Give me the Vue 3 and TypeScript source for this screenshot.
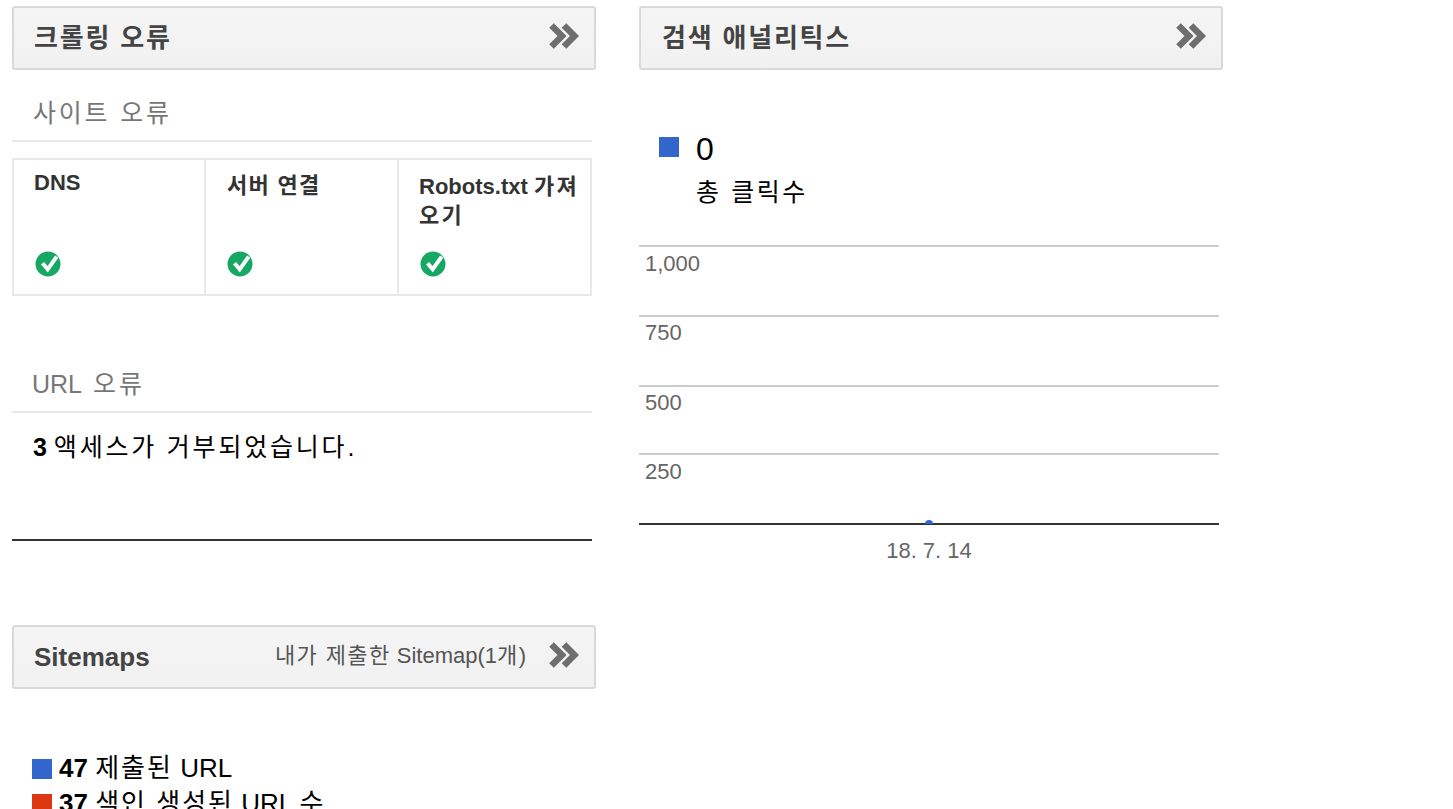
<script setup lang="ts">
const checks = [
  { name: 'DNS', cls: 'dns', ko: '', ko2: '' },
  { name: '', cls: 'srv', ko: '서버 연결', ko2: '' },
  { name: 'Robots.txt ', cls: 'rob', ko: '가져', ko2: '오기' },
]
const ticks = [
  { label: '1,000', h: 70 },
  { label: '750', h: 70 },
  { label: '500', h: 68 },
  { label: '250', h: 70 },
]
</script>

<template>
  <div class="page">
    <div class="col">
      <div class="hdr">
        <span class="ttl ko-t">크롤링 오류</span>
        <svg class="chev" viewBox="0 0 30 26"><path d="M2.500 2.500L13 13 2.500 23.500M15 2.500L25.500 13 15 23.500" fill="none" stroke="#6e6e6e" stroke-width="6.500"/></svg>
      </div>
      <div class="sub first ko-s">사이트 오류</div>
      <div class="grid">
        <div v-for="c in checks" :key="c.cls" class="cell" :class="c.cls">
          <div class="cname">{{ c.name }}<span class="ko-c">{{ c.ko }}</span><template v-if="c.ko2"><br><span class="ko-c">{{ c.ko2 }}</span></template></div>
          <svg class="ok" viewBox="0 0 26 26"><circle cx="13" cy="13" r="12.500" fill="#16a765"/><path d="M7.500 12.300l5.200 6 9-12.600" fill="none" stroke="#fff" stroke-width="4"/></svg>
        </div>
      </div>
      <div class="sub second">URL <span class="ko-u">오류</span></div>
      <div class="msg"><b>3</b> <span class="ko-s">액세스가 거부되었습니다.</span></div>
      <div class="hdr sm">
        <span class="ttl">Sitemaps</span>
        <span class="extra"><span class="ko-e">내가 제출한</span> Sitemap(1<span class="ko-e">개</span>)</span>
        <svg class="chev" viewBox="0 0 30 26"><path d="M2.500 2.500L13 13 2.500 23.500M15 2.500L25.500 13 15 23.500" fill="none" stroke="#6e6e6e" stroke-width="6.500"/></svg>
      </div>
      <div class="leg">
        <div class="lrow"><i class="sq blue"></i><span><b>47</b> <span class="ko-l">제출된</span> URL</span></div>
        <div class="lrow"><i class="sq red"></i><span><b>37</b> <span class="ko-l">색인 생성된</span> URL <span class="ko-l">수</span></span></div>
      </div>
    </div>
    <div class="col">
      <div class="hdr">
        <span class="ttl ko-t shift">검색 애널리틱스</span>
        <svg class="chev" viewBox="0 0 30 26"><path d="M2.500 2.500L13 13 2.500 23.500M15 2.500L25.500 13 15 23.500" fill="none" stroke="#6e6e6e" stroke-width="6.500"/></svg>
      </div>
      <div class="stat">
        <i class="sq blue"></i>
        <div>
          <div class="num">0</div>
          <div class="lab ko-s">총 클릭수</div>
        </div>
      </div>
      <div class="chart">
        <div v-for="t in ticks" :key="t.label" class="tick" :style="{ height: t.h + 'px' }">{{ t.label }}</div>
        <div class="base"><i class="dot"></i></div>
        <div class="date">18. 7. 14</div>
      </div>
    </div>
  </div>
</template>

<style>
html, body { margin: 0; height: 100%; overflow: hidden; background: #fff; }
</style>

<style scoped>
.page {
  display: flex;
  gap: 43px;
  padding: 6px 0 0 12px;
  height: 803px;
  overflow: hidden;
  font-family: "Liberation Sans", "Noto Sans CJK KR", sans-serif;
  color: #000;
}
.col { width: 584px; flex: none; }
.hdr {
  box-sizing: border-box;
  height: 64px;
  border: 2px solid #d9d9d9;
  border-radius: 3px;
  background: linear-gradient(#f5f5f5, #f1f1f1);
  display: flex;
  align-items: center;
  padding: 0 15px 0 20px;
}
.ttl { font-size: 26px; font-weight: 700; color: #444; flex: 1; line-height: 1; }
.ko-t { letter-spacing: 1.8px; }
.ko-s { letter-spacing: 2.8px; }
.ko-u { letter-spacing: 3px; margin-left: 5px; }
.ko-c { letter-spacing: 1.3px; }
.rob .ko-c { letter-spacing: 2.3px; }
.ko-e { letter-spacing: 1.4px; }
.ko-l { letter-spacing: 2px; }
.shift { padding-left: 1px; }
.extra { font-size: 22px; color: #555; margin-right: 23px; position: relative; top: -4px; }
.chev { width: 30px; height: 26px; display: block; position: relative; top: -2px; }
.sub {
  width: 580px;
  box-sizing: border-box;
  padding-left: 21px;
  font-size: 25px;
  color: #777;
  border-bottom: 2px solid #e8e8e8;
}
.first { margin-top: 24px; height: 48px; line-height: 38px; }
.grid {
  width: 580px;
  box-sizing: border-box;
  margin-top: 16px;
  height: 138px;
  display: grid;
  grid-template-columns: 190px 193px 1fr;
  border: 2px solid #e8e8e8;
}
.cell { padding: 0 2px 0 20px; position: relative; box-sizing: border-box; }
.cell + .cell { border-left: 2px solid #e8e8e8; }
.cname { font-size: 22px; font-weight: 700; color: #333; line-height: 29px; }
.dns .cname { padding-top: 8px; }
.srv .cname { padding-top: 11px; padding-left: 1px; }
.rob .cname { padding-top: 12px; }
.ok { position: absolute; left: 21px; top: 91px; width: 26px; height: 26px; }
.second { margin-top: 70px; height: 47px; line-height: 36px; padding-left: 20px; }
.msg {
  width: 580px;
  box-sizing: border-box;
  padding-left: 21px;
  height: 128px;
  font-size: 25px;
  line-height: 68px;
  border-bottom: 2px solid #333;
  margin-bottom: 84px;
}
.leg { margin-top: 62px; padding-left: 20px; font-size: 26px; line-height: 35px; }
.lrow { display: flex; align-items: center; white-space: pre; }
.sq { display: block; width: 20px; height: 20px; flex: none; }
.lrow .sq { margin-right: 7px; }
.blue { background: #3366cc; }
.red { background: #dc3912; }
.stat { display: flex; gap: 17px; padding: 60px 0 0 20px; height: 115px; }
.stat .sq { margin-top: 7px; }
.num { font-size: 32px; line-height: 38px; }
.lab { font-size: 25px; line-height: 46px; margin-top: 1px; letter-spacing: 2.6px; }
.chart { width: 580px; }
.tick {
  box-sizing: border-box;
  border-top: 2px solid #ccc;
  padding-left: 6px;
  font-size: 22px;
  line-height: 32px;
  color: #666;
}
.tick:nth-child(1), .tick:nth-child(4) { padding-top: 1px; }
.base { height: 2px; background: #333; position: relative; overflow: visible; }
.dot {
  position: absolute;
  left: 286px;
  top: -3px;
  width: 8px;
  height: 4px;
  border-radius: 4px 4px 0 0;
  background: #3366cc;
}
.date { text-align: center; font-size: 22px; color: #666; line-height: 30px; margin-top: 11px; }
</style>
